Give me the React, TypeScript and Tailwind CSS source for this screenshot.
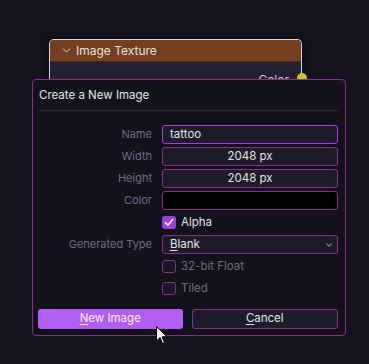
import { ChevronDown } from 'lucide-react';

const FIELDS = [
    { label: 'Name', value: 'tattoo', align: 'left', focus: true },
    { label: 'Width', value: '2048 px', align: 'center', focus: false },
    { label: 'Height', value: '2048 px', align: 'center', focus: false },
];

function Row({ label, children }: { label?: string; children: React.ReactNode }) {
    return (
        <div className="flex items-center h-[19px]">
            <div className="w-[124px] pr-[10px] text-right text-[11px] text-[#6f6a85] leading-none">{label}</div>
            <div className="flex-1 h-full flex items-center">{children}</div>
        </div>
    );
}

function Check({ checked, label }: { checked: boolean; label: string }) {
    return (
        <div className="flex items-center gap-[5px]">
            {checked ? (
                <span className="w-[14px] h-[13px] rounded-[3px] bg-[#9a3fe6] flex items-center justify-center">
                    <svg width="10" height="9" viewBox="0 0 10 9">
                        <path d="M1.5 4.8 L4 7.2 L8.6 1.6" fill="none" stroke="#fff" strokeWidth="1.6" strokeLinecap="round" strokeLinejoin="round" />
                    </svg>
                </span>
            ) : (
                <span className="w-[14px] h-[13px] rounded-[3px] border border-[#8a2e8e] bg-[#1a1824]" />
            )}
            <span className={`text-[11.5px] leading-none ${checked ? 'text-[#e4e2ea]' : 'text-[#6f6a80]'}`}>{label}</span>
        </div>
    );
}

export default function App() {
    return (
        <main className="relative w-[369px] h-[364px] overflow-hidden bg-[#14131d]" style={{ fontFamily: 'Inter, "Noto Sans", sans-serif' }}>

            {/* node on the canvas */}
            <div className="absolute left-[49px] top-[39px] w-[253px] h-[60px] rounded-t-[5px] border-t border-x border-[#d8d6dc] bg-[#232032] shadow-[0_2px_8px_rgba(0,0,0,0.6)]">
                <div className="h-[22px] rounded-t-[4px] bg-[#733f1f] flex items-center pl-[10px] gap-[3px] text-[12px] text-[#e8e2dc] border-b border-[#4a2a18]">
                    <ChevronDown size={13} strokeWidth={1.6} className="text-[#e8e2dc]" />
                    <span>Image Texture</span>
                </div>
                <div className="flex justify-end items-center pr-[12px] pt-[9px] text-[12px] text-[#d0ced6]">Color</div>
                <span className="absolute right-[-6px] top-[33px] w-[10px] h-[10px] rounded-full bg-[#c9c52c]" />
            </div>

            {/* dialog */}
            <div className="absolute left-[32px] top-[79px] w-[314px] h-[257px] rounded-[4px] border border-[#8a2e8e] bg-[#13121b] pl-[5px] pr-[7px] text-[#e4e2ea]">
                <div className="h-[31px] flex items-center pl-[1px] pt-[1px] text-[11.5px] border-b border-[#2a2833]">Create a New Image</div>

                <div className="flex flex-col mt-[14px] gap-[3px]">
                    {FIELDS.map((f) => (
                        <Row key={f.label} label={f.label}>
                            <div
                                className={`w-full h-full rounded-[3px] border flex items-center text-[11.5px] bg-[#1e1c2a] ${f.focus ? 'border-[#a040e6] pl-[7px]' : 'border-[#8a2e8e] justify-center'}`}
                            >
                                {f.value}
                            </div>
                        </Row>
                    ))}
                    <Row label="Color">
                        <div className="w-full h-full rounded-[3px] border border-[#8a2e8e] bg-black" />
                    </Row>
                    <Row>
                        <Check checked label="Alpha" />
                    </Row>
                    <Row label="Generated Type">
                        <div className="w-full h-full rounded-[3px] border border-[#8a2e8e] bg-[#1e1c2a] flex items-center justify-between pl-[7px] pr-[3px] text-[11.5px]">
                            <span><span className="underline underline-offset-2">B</span>lank</span>
                            <ChevronDown size={10} strokeWidth={2.2} className="text-[#c8c6d0]" />
                        </div>
                    </Row>
                    <Row>
                        <Check checked={false} label="32-bit Float" />
                    </Row>
                    <Row>
                        <Check checked={false} label="Tiled" />
                    </Row>
                </div>

                <div className="flex gap-[9px] mt-[11px]">
                    <button className="flex-1 h-[20px] rounded-[3px] bg-[#b25ef2] text-[11.5px] text-[#f4eefa] leading-none">
                        <span className="underline underline-offset-2">N</span>ew Image
                    </button>
                    <button className="flex-1 h-[20px] rounded-[3px] border border-[#8a2e8e] bg-[#1e1c2a] text-[11.5px] text-[#e4e2ea] leading-none">
                        <span className="underline underline-offset-2">C</span>ancel
                    </button>
                </div>
            </div>

            {/* mouse pointer */}
            <svg className="absolute left-[156px] top-[326px]" width="12" height="19" viewBox="0 0 12 19">
                <path d="M0.5 0.5 L0.5 15 L4 11.5 L6.5 17.5 L8.5 16.6 L6 10.8 L11 10.8 Z" fill="#fff" stroke="#000" strokeWidth="1" />
            </svg>
        </main>
    );
}
